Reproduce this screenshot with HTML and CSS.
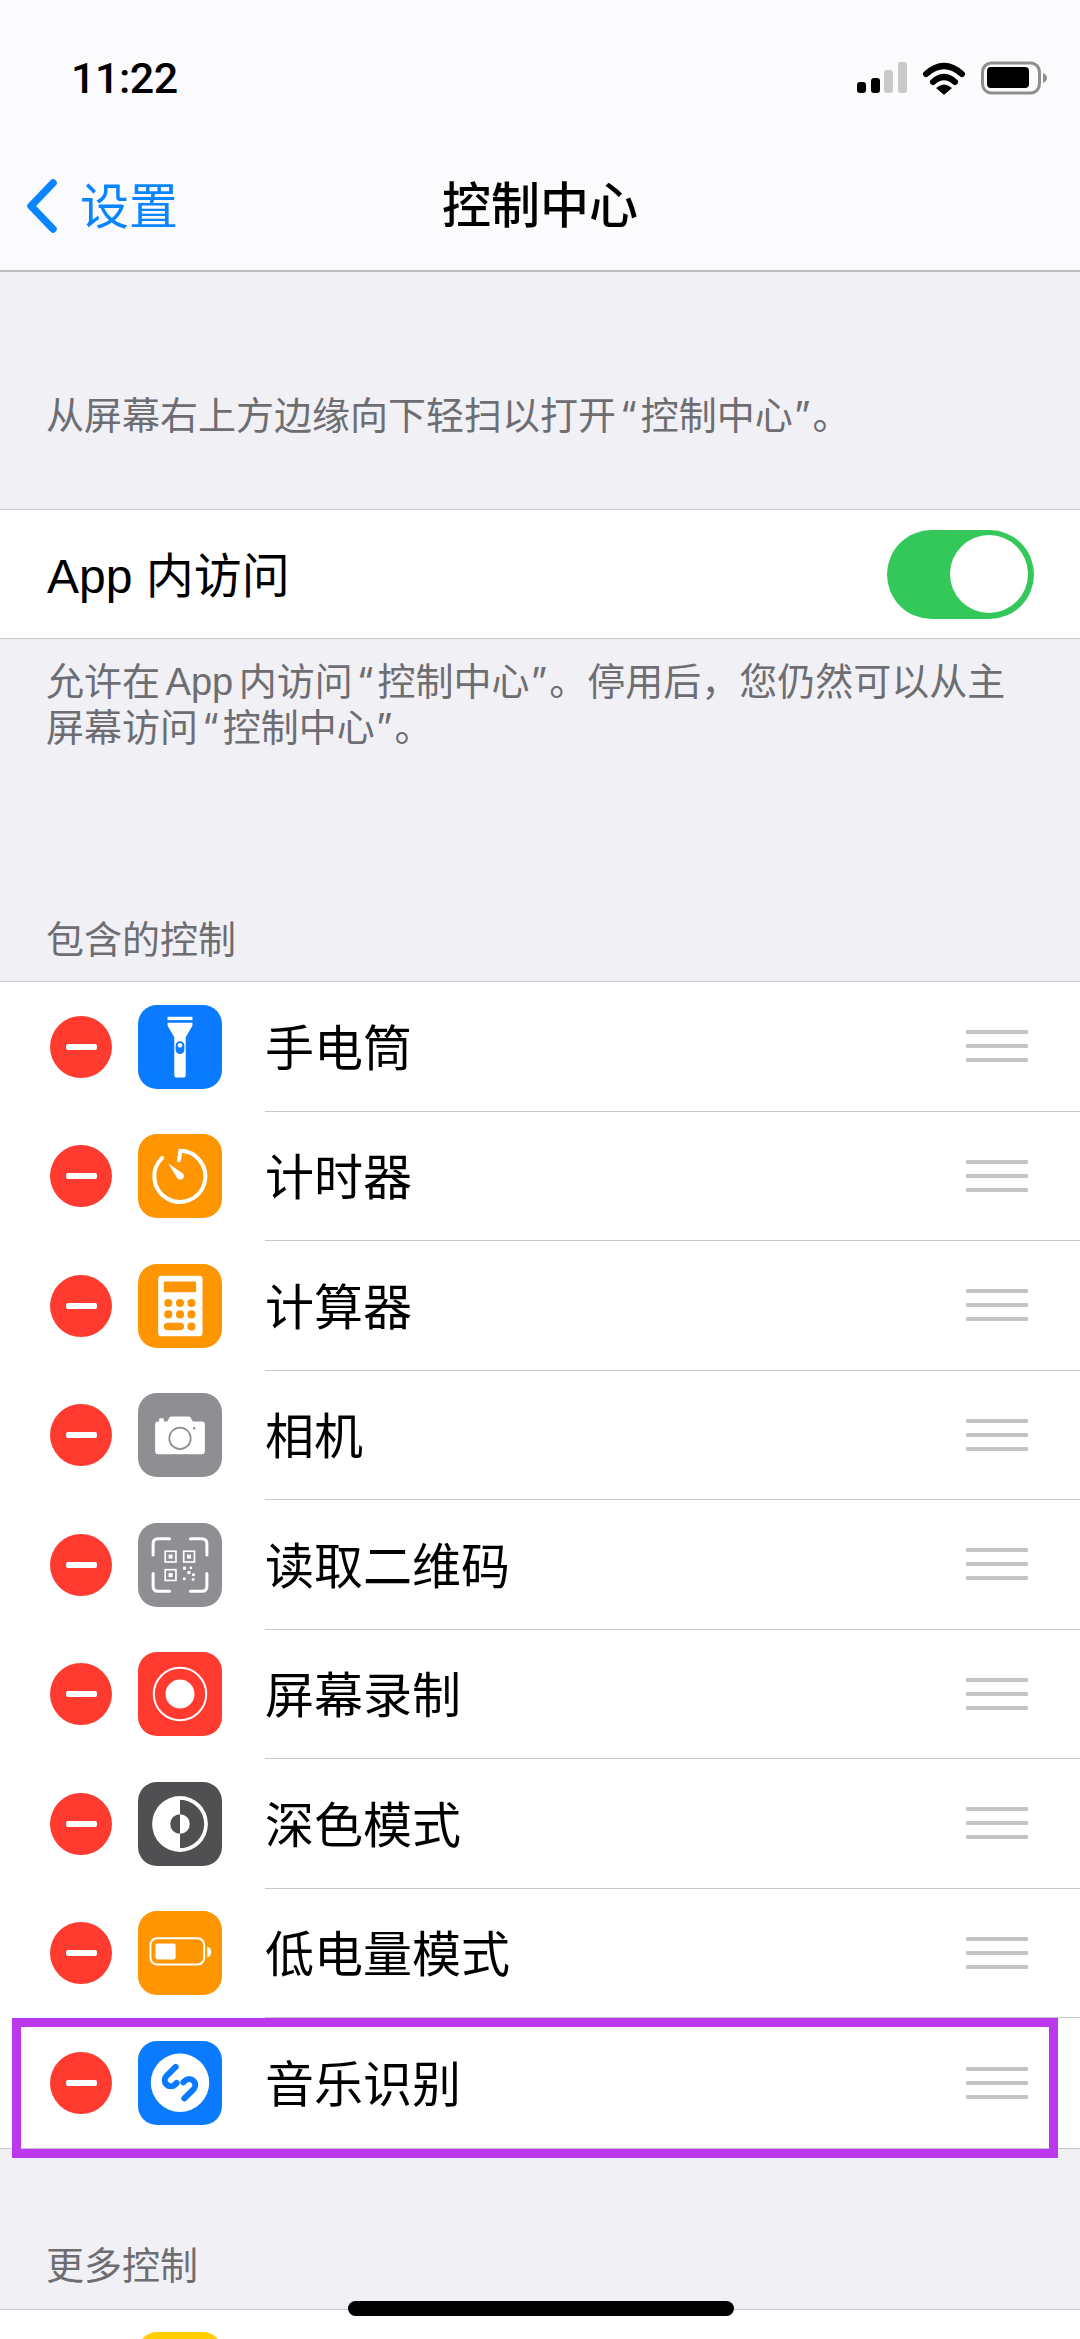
FILE: index.html
```html
<!DOCTYPE html>
<html lang="zh-CN">
<head>
<meta charset="utf-8">
<title>控制中心</title>
<link rel="stylesheet" href="styles.css">
</head>
<body>
<div class="screen">
  <header class="header">
    <div class="status">
      <span class="time">11:22</span>
      <svg class="status-icons" width="190" height="34" viewBox="0 0 190 34">
        <rect x="0" y="21" width="9" height="11" rx="3" fill="#000"/>
        <rect x="14" y="17" width="9" height="15" rx="3" fill="#000"/>
        <rect x="27" y="9" width="9" height="23" rx="3" fill="#c9c9c9"/>
        <rect x="41" y="1" width="9" height="31" rx="3" fill="#c9c9c9"/>
        <path d="M69 13Q87 -3 105 13M76 21Q87 11 98 21" fill="none" stroke="#000" stroke-width="6" stroke-linecap="round"/>
        <path d="M79 27Q87 20 95 27L88 33Q87 34 86 33Z" fill="#000"/>
        <rect x="125.5" y="2" width="57" height="30" rx="9" fill="none" stroke="#8e8e8e" stroke-width="3"/>
        <rect x="130" y="6" width="42" height="21" rx="4" fill="#000"/>
        <path d="M186 12Q190 14 190 17Q190 20 186 22Z" fill="#8e8e8e"/>
      </svg>
    </div>
    <nav class="nav">
      <div class="back">
        <svg class="chevron" width="32" height="54" viewBox="0 0 32 54"><path d="M27 4L5 27L27 50" fill="none" stroke="#0a84ff" stroke-width="7.5" stroke-linecap="round" stroke-linejoin="round"/></svg>
        <span class="back-text">设置</span>
      </div>
      <h1 class="title">控制中心</h1>
      <div></div>
    </nav>
  </header>

  <p class="note intro">从屏幕右上方边缘向下轻扫以打开<span class="q-open">“</span>控制中心<span class="q-close">”</span>。</p>

  <div class="app-row">
    <span class="app-label">App 内访问</span>
    <span class="toggle"><span class="knob"></span></span>
  </div>
  <p class="note foot">允许在 App 内访问<span class="q-open">“</span>控制中心<span class="q-close">”</span>。停用后，您仍然可以从主屏幕访问<span class="q-open">“</span>控制中心<span class="q-close">”</span>。</p>

  <h2 class="note heading first">包含的控制</h2>
  <ul class="list">
    <li class="row">
      <span class="del"></span>
      <svg class="icon blue" viewBox="0 0 250 250">
        <rect x="88" y="35" width="74" height="10" fill="#fff"/>
        <path d="M88 53H162V62L142 96V208Q142 216 134 216H116Q108 216 108 208V96L88 62Z" fill="#fff"/>
        <rect x="112" y="108" width="26" height="38" rx="13" fill="#0a7aff"/>
        <circle cx="125" cy="120" r="7" fill="#fff"/>
      </svg>
      <div class="body"><span class="label">手电筒</span><span class="handle"><i></i><i></i><i></i></span></div>
    </li>
    <li class="row">
      <span class="del"></span>
      <svg class="icon orange" viewBox="0 0 250 250">
        <path d="M122 78L126 50A76 76 0 1 1 72 71" fill="none" stroke="#fff" stroke-width="12" stroke-linecap="round"/>
        <path d="M90 88L133 117A11 11 0 1 1 117 132Z" fill="#fff"/>
      </svg>
      <div class="body"><span class="label">计时器</span><span class="handle"><i></i><i></i><i></i></span></div>
    </li>
    <li class="row">
      <span class="del"></span>
      <svg class="icon orange" viewBox="0 0 250 250">
        <rect x="60" y="35" width="132" height="180" rx="10" fill="#fff"/>
        <rect x="77" y="52" width="96" height="32" rx="4" fill="#ff9500"/>
        <g fill="#ff9500">
          <circle cx="90" cy="116" r="12"/><circle cx="125" cy="116" r="12"/><circle cx="159" cy="116" r="12"/>
          <circle cx="90" cy="150" r="12"/><circle cx="125" cy="150" r="12"/><circle cx="159" cy="150" r="12"/>
          <rect x="77" y="175" width="60" height="22" rx="11"/><circle cx="159" cy="186" r="12"/>
        </g>
      </svg>
      <div class="body"><span class="label">计算器</span><span class="handle"><i></i><i></i><i></i></span></div>
    </li>
    <li class="row">
      <span class="del"></span>
      <svg class="icon gray" viewBox="0 0 250 250">
        <path d="M62 85H63V78Q63 75 66 75H74Q77 75 77 78V85H87L93 74Q95 70 100 70H150Q155 70 157 74L163 85H190Q199 85 199 94V173Q199 182 190 182H60Q51 182 51 173V94Q51 85 60 85Z" fill="#fff"/>
        <circle cx="125" cy="135" r="32" fill="#fff" stroke="#8e8e93" stroke-width="5"/>
        <circle cx="167" cy="105" r="3.5" fill="#8e8e93"/>
      </svg>
      <div class="body"><span class="label">相机</span><span class="handle"><i></i><i></i><i></i></span></div>
    </li>
    <li class="row">
      <span class="del"></span>
      <svg class="icon gray" viewBox="0 0 250 250">
        <path d="M45 95V62Q45 47 60 47H94M156 47H190Q205 47 205 62V95M205 150V188Q205 203 190 203H156M94 203H60Q45 203 45 188V150" fill="none" stroke="#fff" stroke-width="9" stroke-linecap="round"/>
        <g fill="none" stroke="#fff" stroke-width="5">
          <rect x="81" y="84" width="32" height="32"/><rect x="136" y="84" width="32" height="32"/><rect x="81" y="139" width="32" height="32"/>
        </g>
        <g fill="#fff">
          <rect x="91" y="94" width="12" height="12"/><rect x="146" y="94" width="12" height="12"/><rect x="91" y="149" width="12" height="12"/>
          <rect x="134" y="130" width="9" height="9"/><rect x="154" y="130" width="7" height="7"/><rect x="147" y="143" width="9" height="9"/><rect x="161" y="150" width="8" height="8"/><rect x="134" y="162" width="8" height="8"/><rect x="160" y="164" width="8" height="8"/>
        </g>
      </svg>
      <div class="body"><span class="label">读取二维码</span><span class="handle"><i></i><i></i><i></i></span></div>
    </li>
    <li class="row">
      <span class="del"></span>
      <svg class="icon red" viewBox="0 0 250 250">
        <circle cx="125" cy="125" r="78" fill="none" stroke="#fff" stroke-width="6"/>
        <circle cx="125" cy="125" r="43" fill="#fff"/>
      </svg>
      <div class="body"><span class="label">屏幕录制</span><span class="handle"><i></i><i></i><i></i></span></div>
    </li>
    <li class="row">
      <span class="del"></span>
      <svg class="icon dark" viewBox="0 0 250 250">
        <circle cx="125" cy="125" r="83" fill="#fff"/>
        <path d="M125 53A72 72 0 0 1 125 197Z" fill="#505052"/>
        <circle cx="125" cy="125" r="29" fill="#fff"/>
        <path d="M125 96A29 29 0 0 0 125 154Z" fill="#505052"/>
      </svg>
      <div class="body"><span class="label">深色模式</span><span class="handle"><i></i><i></i><i></i></span></div>
    </li>
    <li class="row">
      <span class="del"></span>
      <svg class="icon orange" viewBox="0 0 250 250">
        <rect x="37" y="81" width="160" height="78" rx="20" fill="none" stroke="#fff" stroke-width="6"/>
        <rect x="52" y="97" width="60" height="47" rx="6" fill="#fff"/>
        <path d="M206 106Q218 110 218 122Q218 134 206 139Z" fill="#fff"/>
      </svg>
      <div class="body"><span class="label">低电量模式</span><span class="handle"><i></i><i></i><i></i></span></div>
    </li>
    <li class="row marked">
      <span class="del"></span>
      <svg class="icon blue" viewBox="0 0 250 250">
        <circle cx="125" cy="124" r="87" fill="#fff"/>
        <path d="M112 77L85 104A18 18 0 0 0 110.5 129.5L115 125M138 171L165 144A18 18 0 0 0 139.5 118.5L135 123" fill="none" stroke="#0a7aff" stroke-width="18" stroke-linecap="round"/>
      </svg>
      <div class="body last"><span class="label">音乐识别</span><span class="handle"><i></i><i></i><i></i></span></div>
      <span class="frame"></span>
    </li>
  </ul>

  <h2 class="note heading more">更多控制</h2>
  <div class="list peek">
    <span class="icon yellow"></span>
  </div>

  <span class="home"></span>
</div>
</body>
</html>
```
FILE: styles.css
```css
* { box-sizing: border-box; }
html, body { margin: 0; padding: 0; }
body {
  width: 1080px;
  height: 2339px;
  overflow: hidden;
  background: #f0f0f5;
  font-family: "Liberation Sans", "Noto Sans CJK SC", sans-serif;
  color: #000;
}
.screen { position: relative; width: 1080px; height: 2339px; overflow: hidden; }

.header { background: #fbfbfd; border-bottom: 2px solid #bdbdc1; height: 272px; }
.status {
  height: 156px;
  display: flex;
  align-items: center;
  justify-content: space-between;
  padding: 0 33px 0 71px;
}
.time { font-family: Roboto, sans-serif; font-weight: 500; font-size: 43px; letter-spacing: -0.5px; }
.status-icons { display: block; }

.nav {
  height: 114px;
  padding: 0 0 14px;
  display: grid;
  grid-template-columns: 1fr auto 1fr;
  align-items: center;
}
.back { display: flex; align-items: center; gap: 22px; padding-left: 26px; color: #0a84ff; font-size: 49px; line-height: 1; }
.back-text { padding-top: 2px; }
.chevron { display: block; }
.title { margin: 0; font-size: 49px; font-weight: 500; line-height: 1; }

.note { margin: 0; color: #6d6d72; font-size: 38px; font-weight: 400; line-height: 46px; padding: 0 48px 0 46px; word-spacing: -5px; }
.q-open { font-family: Inter, sans-serif; line-height: 0; margin: 0 4px 0 4px; }
.q-close { font-family: Inter, sans-serif; line-height: 0; margin: 0 2px 0 1px; }
.intro { padding-top: 121px; padding-bottom: 70px; }
.foot { padding-top: 20px; }
.heading.first { padding-top: 166px; padding-bottom: 18px; }
.heading.more { padding-top: 94px; padding-bottom: 20px; }

.app-row {
  height: 130px;
  background: #fff;
  border-top: 1px solid #c8c8cc;
  border-bottom: 1px solid #c8c8cc;
  display: flex;
  align-items: center;
  justify-content: space-between;
  padding: 0 46px 0 47px;
}
.app-label { font-size: 48px; line-height: 1; padding-top: 5px; }
.toggle {
  width: 147px;
  height: 89px;
  border-radius: 45px;
  background: #34c759;
  display: flex;
  align-items: center;
  justify-content: flex-end;
  padding-right: 6px;
}
.knob { width: 78px; height: 78px; border-radius: 50%; background: #fff; }

.list {
  list-style: none;
  margin: 0;
  padding: 0;
  background: #fff;
  border-top: 1px solid #c8c8cc;
  border-bottom: 1px solid #c8c8cc;
}
.row {
  position: relative;
  height: 129.5px;
  display: flex;
  align-items: center;
  padding-left: 50px;
}
.del {
  flex: none;
  width: 62px;
  height: 62px;
  border-radius: 50%;
  background: #ff3b30;
  margin-right: 26px;
  display: flex;
  align-items: center;
  justify-content: center;
}
.del::before { content: ""; width: 31px; height: 6px; border-radius: 2px; background: #fff; }
.icon { flex: none; display: block; width: 84px; height: 84px; border-radius: 19px; margin-right: 43px; }
.blue { background: #0a7aff; }
.orange { background: #ff9500; }
.gray { background: #8e8e93; }
.red { background: #ff3b30; }
.dark { background: #505052; }
.yellow { background: #ffcc00; }
.body {
  flex: 1;
  align-self: stretch;
  display: flex;
  align-items: center;
  justify-content: space-between;
  border-bottom: 1px solid #c8c8cc;
  padding: 0 52px 0 0;
}
.body.last { border-bottom: 0; }
.label { font-size: 49px; line-height: 1; padding-top: 6px; }
.handle { display: flex; flex-direction: column; gap: 10px; }
.handle i { display: block; width: 62px; height: 4px; border-radius: 1px; background: #c4c4c6; }

.frame {
  position: absolute;
  left: 12px;
  top: 0;
  width: 1046px;
  height: 140px;
  border: 9px solid #bc38ee;
}
.peek { padding: 22px 0 0 138px; height: 160px; }
.home {
  position: absolute;
  left: 348px;
  top: 2301px;
  width: 386px;
  height: 15px;
  border-radius: 8px;
  background: #000;
}
```
